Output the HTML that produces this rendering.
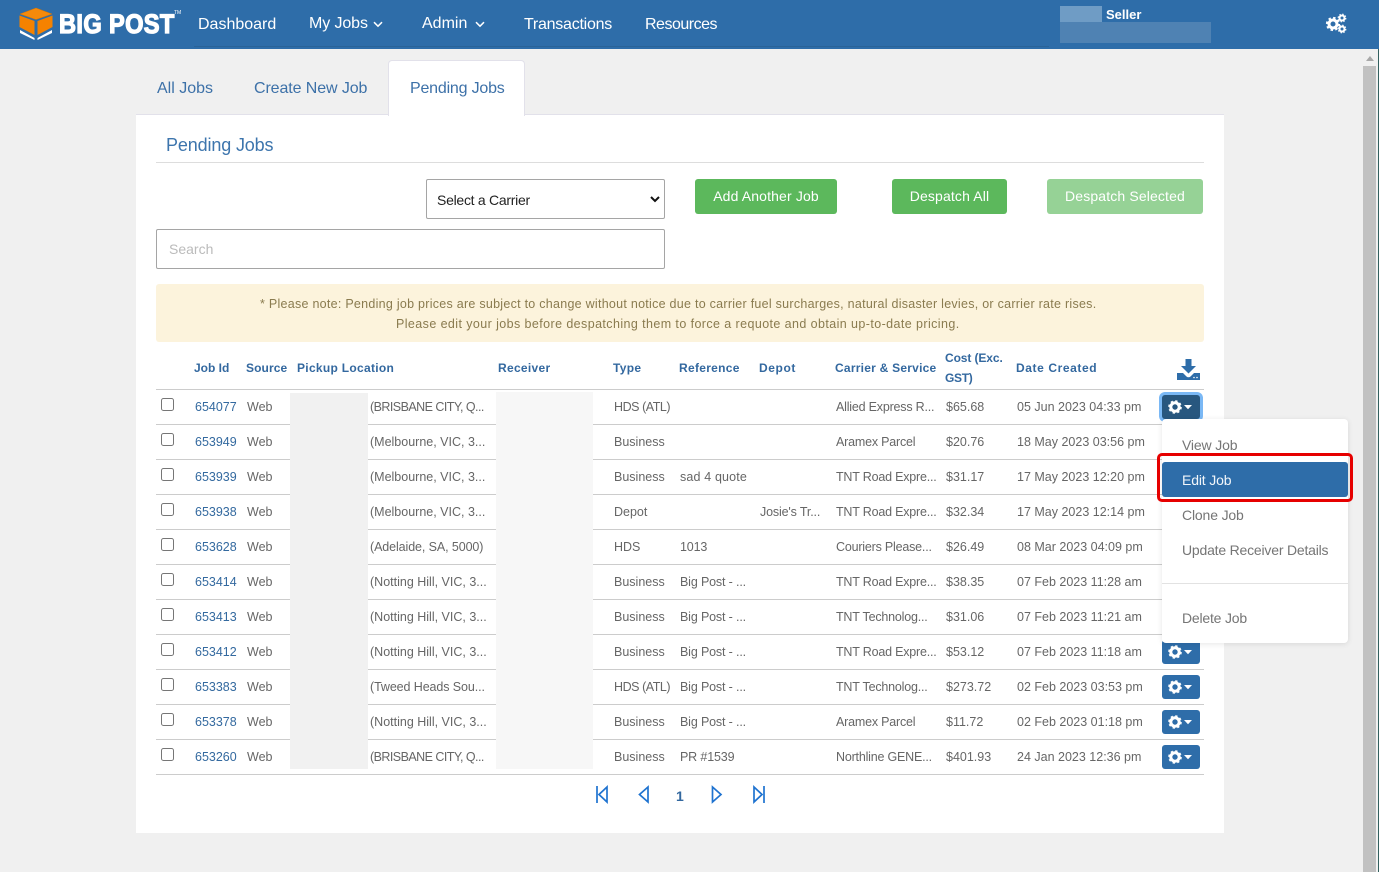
<!DOCTYPE html>
<html lang="en"><head><meta charset="utf-8"><title>Pending Jobs</title>
<style>
*{box-sizing:border-box}
html,body{margin:0;padding:0;width:1379px;height:872px;overflow:hidden;background:#f0f0f0;font-family:"Liberation Sans",sans-serif}
.a{position:absolute;white-space:nowrap}
#nav{position:absolute;left:0;top:0;width:1379px;height:49px;background:#2e6da9}
.n{position:absolute;top:14px;color:#fff;font-size:16px;line-height:20px;white-space:nowrap}
.tab{position:absolute;top:79px;font-size:16px;line-height:20px;color:#3d71a8}
.btn{position:absolute;top:179px;height:35px;border-radius:3px;background:#5cb85c;color:#fff;font-size:14px;line-height:35px;text-align:center;letter-spacing:.14px}
.h{position:absolute;font-size:12px;font-weight:bold;color:#33689f;line-height:20px;white-space:nowrap;letter-spacing:.3px}
.r{position:absolute;left:156px;width:1048px;height:35px;border-bottom:1px solid #ccc}
.r span{position:absolute;top:8px;font-size:12.5px;line-height:18px;color:#666;white-space:nowrap}
.r span.id{left:39px;color:#33699f}.s{left:91px}.p{left:214px}.t{left:458px}.f{left:524px;letter-spacing:-.15px}.d{left:604px;letter-spacing:-.15px}.c{left:680px;letter-spacing:-.2px}.m{left:790px}.dt{left:861px}
.r span.b{letter-spacing:-.55px}.r span.h2{letter-spacing:-.45px}
.r i{position:absolute;left:5px;top:8px;width:13px;height:13px;border:1px solid #767676;border-radius:2.5px;background:#fff}
.g{position:absolute;left:1162px;width:38px;height:24px;background:#2e6da9;border-radius:3px}
.g svg{position:absolute;left:0;top:0}
.dd{position:absolute;left:1182px;font-size:14px;line-height:20px;color:#757575;white-space:nowrap;letter-spacing:-.15px}
</style></head><body>
<svg width="0" height="0" style="position:absolute"><defs>
<symbol id="cog" viewBox="0 0 38 24">
<circle cx="13" cy="12" r="4.200" fill="none" stroke="#fff" stroke-width="3"/>
<circle cx="13" cy="12" r="5.600" fill="none" stroke="#fff" stroke-width="2.400" stroke-dasharray="2.200 2.200"/>
<path d="M22 10h8l-4 4.200z" fill="#fff"/>
</symbol></defs></svg>

<div id="nav"></div>
<div class="a" style="left:194px;top:46px;width:855px;height:1px;background:#2a6398"></div>
<svg class="a" style="left:18px;top:7px" width="36" height="34" viewBox="0 0 36 34">
<path d="M18 1 34 7 18 12.500 2 7z" fill="#f58a0b"/>
<path d="M1.500 8.500 16.500 14V28L1.500 20z" fill="#f58200"/>
<path d="M34.500 8.500 19.500 14V28L34.500 20z" fill="#f58200"/>
<path d="M2 24 16.500 32V34L2 27zM34 24 19.500 32V34L34 27z" fill="#fff" transform="translate(0 -1)"/>
<path d="M18 1 34 7 18 12.500 2 7z" fill="none" stroke="#d97400" stroke-width=".5"/>
</svg>
<div class="a" style="left:59px;top:6px;color:#fff;font-size:27px;line-height:36px;font-weight:bold;letter-spacing:.4px;-webkit-text-stroke:1.300px #fff;transform-origin:0 50%;transform:scaleX(.875)">BIG POST</div>
<div class="a" style="left:174px;top:10px;color:#fff;font-size:5px;line-height:6px">TM</div>
<div class="n" style="left:198px;top:15px">Dashboard</div>
<div class="n" style="left:309px;letter-spacing:-.1px">My Jobs</div>
<svg class="a" style="left:373px;top:21px" width="10" height="7"><path d="M1 1.200 5 5.200 9 1.200" fill="none" stroke="#fff" stroke-width="1.500"/></svg>
<div class="n" style="left:422px">Admin</div>
<svg class="a" style="left:475px;top:21px" width="10" height="7"><path d="M1 1.200 5 5.200 9 1.200" fill="none" stroke="#fff" stroke-width="1.500"/></svg>
<div class="n" style="left:524px;top:15px;letter-spacing:-.25px">Transactions</div>
<div class="n" style="left:645px;top:15px;letter-spacing:-.5px">Resources</div>
<div class="a" style="left:1060px;top:6px;width:42px;height:18px;background:#6f9cc5"></div>
<div class="a" style="left:1060px;top:22px;width:151px;height:21px;background:#4f82b3"></div>
<div class="a" style="left:1106px;top:6px;color:#fff;font-size:13px;line-height:17px;font-weight:bold">Seller</div>
<svg class="a" style="left:1325px;top:13px" width="22" height="21" viewBox="0 0 22 21">
<circle cx="8" cy="11" r="4" fill="none" stroke="#fff" stroke-width="3"/>
<circle cx="8" cy="11" r="6" fill="none" stroke="#fff" stroke-width="2.200" stroke-dasharray="2.400 2.300"/>
<circle cx="17" cy="5" r="2.500" fill="none" stroke="#fff" stroke-width="2"/>
<circle cx="17" cy="5" r="3.800" fill="none" stroke="#fff" stroke-width="1.200" stroke-dasharray="1.500 1.500"/>
<circle cx="17" cy="16" r="2.500" fill="none" stroke="#fff" stroke-width="2"/>
<circle cx="17" cy="16" r="3.800" fill="none" stroke="#fff" stroke-width="1.200" stroke-dasharray="1.500 1.500"/>
</svg>

<div class="a" style="left:1378px;top:49px;width:1px;height:823px;background:#33605f"></div>
<div class="a" style="left:1363px;top:66px;width:13px;height:806px;background:#c1c1c1"></div>
<svg class="a" style="left:1366px;top:56px" width="8" height="5"><path d="M0 5 4 0 8 5z" fill="#a8a8a8"/></svg>

<div class="a" style="left:136px;top:114px;width:1088px;height:719px;background:#fff;border-top:1px solid #e2e1ea"></div>
<div class="a" style="left:388px;top:60px;width:137px;height:56px;background:#fff;border:1px solid #e2e1ea;border-bottom:0;border-radius:4px 4px 0 0"></div>
<div class="tab" style="left:157px">All Jobs</div>
<div class="tab" style="left:254px;letter-spacing:-.1px">Create New Job</div>
<div class="tab" style="left:410px;letter-spacing:-.2px">Pending Jobs</div>

<div class="a" style="left:166px;top:133px;font-size:18px;line-height:24px;color:#3d75ad;letter-spacing:-.14px">Pending Jobs</div>
<div class="a" style="left:156px;top:162px;width:1048px;height:1px;background:#ddd"></div>

<div class="a" style="left:426px;top:179px;width:239px;height:40px;border:1px solid #a5a5a5;border-radius:2px;background:#fff"></div>
<div class="a" style="left:437px;top:191px;font-size:14px;line-height:18px;color:#222;letter-spacing:-.27px">Select a Carrier</div>
<svg class="a" style="left:650px;top:196px" width="10" height="7"><path d="M1 1 5 5 9 1" fill="none" stroke="#111" stroke-width="2"/></svg>
<div class="btn" style="left:695px;width:142px">Add Another Job</div>
<div class="btn" style="left:892px;width:115px">Despatch All</div>
<div class="btn" style="left:1047px;width:156px;background:#96d296">Despatch Selected</div>
<div class="a" style="left:156px;top:229px;width:509px;height:40px;border:1px solid #a5a5a5;border-radius:2px;background:#fff"></div>
<div class="a" style="left:169px;top:241px;font-size:14px;line-height:17px;color:#bbb">Search</div>

<div class="a" style="left:156px;top:284px;width:1048px;height:58px;background:#fcf3dc;border-radius:3px"></div>
<div class="a" style="left:260px;top:294px;font-size:12.500px;line-height:20px;color:#8a7b4f;letter-spacing:.268px">* Please note: Pending job prices are subject to change without notice due to carrier fuel surcharges, natural disaster levies, or carrier rate rises.</div>
<div class="a" style="left:396px;top:314px;font-size:12.500px;line-height:20px;color:#8a7b4f;letter-spacing:.41px">Please edit your jobs before despatching them to force a requote and obtain up-to-date pricing.</div>

<div class="h" style="left:194px;top:358px;letter-spacing:0">Job Id</div>
<div class="h" style="left:246px;top:358px;letter-spacing:.1px">Source</div>
<div class="h" style="left:297px;top:358px">Pickup Location</div>
<div class="h" style="left:498px;top:358px">Receiver</div>
<div class="h" style="left:613px;top:358px">Type</div>
<div class="h" style="left:679px;top:358px">Reference</div>
<div class="h" style="left:759px;top:358px;letter-spacing:.6px">Depot</div>
<div class="h" style="left:835px;top:358px;letter-spacing:.24px">Carrier &amp; Service</div>
<div class="h" style="left:945px;top:348px;letter-spacing:-.1px">Cost (Exc.</div>
<div class="h" style="left:945px;top:368px;letter-spacing:-.3px">GST)</div>
<div class="h" style="left:1016px;top:358px;letter-spacing:.6px">Date Created</div>
<svg class="a" style="left:1177px;top:359px" width="23" height="22" viewBox="0 0 23 22">
<path d="M8.500 0h6v7h4.500l-7.500 7.500L4 7h4.500z" fill="#2e6da9"/>
<path d="M0 14h6l3.500 3.500a3 3 0 0 0 4 0L17 14h6v7H0z" fill="#2e6da9"/>
<circle cx="17" cy="18.500" r=".8" fill="#fff"/><circle cx="20" cy="18.500" r=".8" fill="#fff"/>
</svg>
<div class="a" style="left:156px;top:389px;width:1048px;height:1px;background:#ccc"></div>

<div class="r" style="top:390px"><i></i><span class="id">654077</span><span class="s">Web</span><span class="p b">(BRISBANE CITY, Q...</span><span class="t h2">HDS (ATL)</span><span class="c">Allied Express R...</span><span class="m">$65.68</span><span class="dt">05 Jun 2023 04:33 pm</span></div>
<div class="r" style="top:425px"><i></i><span class="id">653949</span><span class="s">Web</span><span class="p">(Melbourne, VIC, 3...</span><span class="t">Business</span><span class="c">Aramex Parcel</span><span class="m">$20.76</span><span class="dt">18 May 2023 03:56 pm</span></div>
<div class="r" style="top:460px"><i></i><span class="id">653939</span><span class="s">Web</span><span class="p">(Melbourne, VIC, 3...</span><span class="t">Business</span><span class="f" style="letter-spacing:.15px">sad 4 quote</span><span class="c">TNT Road Expre...</span><span class="m">$31.17</span><span class="dt">17 May 2023 12:20 pm</span></div>
<div class="r" style="top:495px"><i></i><span class="id">653938</span><span class="s">Web</span><span class="p">(Melbourne, VIC, 3...</span><span class="t">Depot</span><span class="d">Josie's Tr...</span><span class="c">TNT Road Expre...</span><span class="m">$32.34</span><span class="dt">17 May 2023 12:14 pm</span></div>
<div class="r" style="top:530px"><i></i><span class="id">653628</span><span class="s">Web</span><span class="p" style="letter-spacing:-.1px">(Adelaide, SA, 5000)</span><span class="t">HDS</span><span class="f">1013</span><span class="c">Couriers Please...</span><span class="m">$26.49</span><span class="dt">08 Mar 2023 04:09 pm</span></div>
<div class="r" style="top:565px"><i></i><span class="id">653414</span><span class="s">Web</span><span class="p">(Notting Hill, VIC, 3...</span><span class="t">Business</span><span class="f">Big Post - ...</span><span class="c">TNT Road Expre...</span><span class="m">$38.35</span><span class="dt">07 Feb 2023 11:28 am</span></div>
<div class="r" style="top:600px"><i></i><span class="id">653413</span><span class="s">Web</span><span class="p">(Notting Hill, VIC, 3...</span><span class="t">Business</span><span class="f">Big Post - ...</span><span class="c">TNT Technolog...</span><span class="m">$31.06</span><span class="dt">07 Feb 2023 11:21 am</span></div>
<div class="r" style="top:635px"><i></i><span class="id">653412</span><span class="s">Web</span><span class="p">(Notting Hill, VIC, 3...</span><span class="t">Business</span><span class="f">Big Post - ...</span><span class="c">TNT Road Expre...</span><span class="m">$53.12</span><span class="dt">07 Feb 2023 11:18 am</span></div>
<div class="r" style="top:670px"><i></i><span class="id">653383</span><span class="s">Web</span><span class="p" style="letter-spacing:-.1px">(Tweed Heads Sou...</span><span class="t h2">HDS (ATL)</span><span class="f">Big Post - ...</span><span class="c">TNT Technolog...</span><span class="m">$273.72</span><span class="dt">02 Feb 2023 03:53 pm</span></div>
<div class="r" style="top:705px"><i></i><span class="id">653378</span><span class="s">Web</span><span class="p">(Notting Hill, VIC, 3...</span><span class="t">Business</span><span class="f">Big Post - ...</span><span class="c">Aramex Parcel</span><span class="m">$11.72</span><span class="dt">02 Feb 2023 01:18 pm</span></div>
<div class="r" style="top:740px"><i></i><span class="id">653260</span><span class="s">Web</span><span class="p b">(BRISBANE CITY, Q...</span><span class="t">Business</span><span class="f">PR #1539</span><span class="c">Northline GENE...</span><span class="m">$401.93</span><span class="dt">24 Jan 2023 12:36 pm</span></div>

<div class="a" style="left:290px;top:393px;width:78px;height:376px;background:#f1f1f1"></div>
<div class="a" style="left:496px;top:392px;width:97px;height:377px;background:#f7f7f7"></div>

<div class="g" style="top:395px;background:#28577f;box-shadow:0 0 0 3px #7ab8f5"><svg width="38" height="24"><use href="#cog"/></svg></div>
<div class="g" style="top:640px"><svg width="38" height="24"><use href="#cog"/></svg></div>
<div class="g" style="top:675px"><svg width="38" height="24"><use href="#cog"/></svg></div>
<div class="g" style="top:710px"><svg width="38" height="24"><use href="#cog"/></svg></div>
<div class="g" style="top:745px"><svg width="38" height="24"><use href="#cog"/></svg></div>

<div class="a" style="left:1162px;top:419px;width:186px;height:224px;background:#fff;border-radius:4px;box-shadow:0 1px 6px rgba(0,0,0,.1)"></div>
<div class="dd" style="top:435px">View Job</div>
<div class="a" style="left:1162px;top:462px;width:186px;height:35px;background:#2e6da9;border-radius:3px"></div>
<div class="dd" style="top:470px;color:#f2f6fa">Edit Job</div>
<div class="dd" style="top:505px">Clone Job</div>
<div class="dd" style="top:540px;letter-spacing:-.2px">Update Receiver Details</div>
<div class="a" style="left:1162px;top:583px;width:186px;height:1px;background:#e2e2e2"></div>
<div class="dd" style="top:608px;letter-spacing:-.2px">Delete Job</div>
<div class="a" style="left:1157px;top:453px;width:196px;height:49px;border:3px solid #e60000;border-radius:5px"></div>

<svg class="a" style="left:590px;top:782px" width="180" height="24" viewBox="0 0 180 24" fill="none" stroke="#1f73d0" stroke-width="1.700">
<path d="M7 4V21"/><path d="M17 5 9 12.500 17 20z"/>
<path d="M58 5 49.500 12.500 58 20z"/>
<path d="M122.500 5 131 12.500 122.500 20z"/>
<path d="M164 5 172 12.500 164 20z"/><path d="M174 4V21"/>
</svg>
<div class="a" style="left:676px;top:787px;font-size:14px;line-height:18px;font-weight:bold;color:#33689f">1</div>
</body></html>
